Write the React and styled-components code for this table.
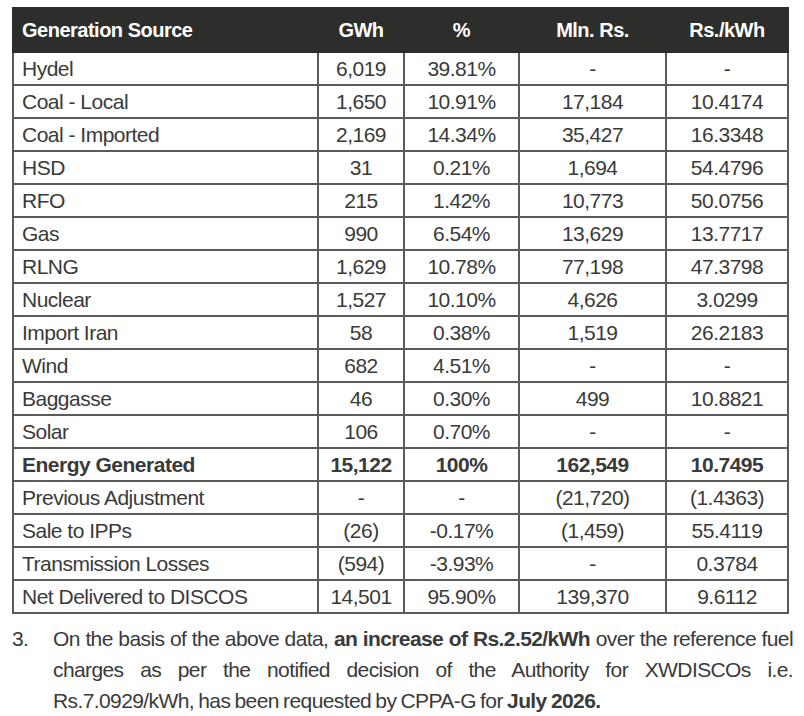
import React from "react";
import styled, { createGlobalStyle } from "styled-components";

const rows = [
  ["Hydel", "6,019", "39.81%", "-", "-"],
  ["Coal - Local", "1,650", "10.91%", "17,184", "10.4174"],
  ["Coal - Imported", "2,169", "14.34%", "35,427", "16.3348"],
  ["HSD", "31", "0.21%", "1,694", "54.4796"],
  ["RFO", "215", "1.42%", "10,773", "50.0756"],
  ["Gas", "990", "6.54%", "13,629", "13.7717"],
  ["RLNG", "1,629", "10.78%", "77,198", "47.3798"],
  ["Nuclear", "1,527", "10.10%", "4,626", "3.0299"],
  ["Import Iran", "58", "0.38%", "1,519", "26.2183"],
  ["Wind", "682", "4.51%", "-", "-"],
  ["Baggasse", "46", "0.30%", "499", "10.8821"],
  ["Solar", "106", "0.70%", "-", "-"],
  ["Energy Generated", "15,122", "100%", "162,549", "10.7495", true],
  ["Previous Adjustment", "-", "-", "(21,720)", "(1.4363)"],
  ["Sale to IPPs", "(26)", "-0.17%", "(1,459)", "55.4119"],
  ["Transmission Losses", "(594)", "-3.93%", "-", "0.3784"],
  ["Net Delivered to DISCOS", "14,501", "95.90%", "139,370", "9.6112"],
];

const headers = ["Generation Source", "GWh", "%", "Mln. Rs.", "Rs./kWh"];
const widths = [305, 86, 115, 147, 122];

const App = () => {
  return (
    <Page>
      <GlobalStyle />
      <Table>
        <colgroup>
          {widths.map((w, i) => (
            <col key={i} style={{ width: w }} />
          ))}
        </colgroup>
        <thead>
          <tr>
            {headers.map((h, i) => (
              <HeadCell key={h} $align={i === 0 ? "left" : "center"}>
                {h}
              </HeadCell>
            ))}
          </tr>
        </thead>
        <tbody>
          {rows.map((r) => (
            <tr key={r[0]}>
              {r.slice(0, 5).map((v, i) => (
                <Cell key={i} $align={i === 0 ? "left" : "center"} $bold={r[5]}>
                  {v}
                </Cell>
              ))}
            </tr>
          ))}
        </tbody>
      </Table>

      <Note>
        <Num>3.</Num>
        <NoteText>
          <Line $justify>
            On the basis of the above data, <b>an increase of Rs.2.52/kWh</b> over the reference fuel
          </Line>
          <Line $justify>
            charges as per the notified decision of the Authority for XWDISCOs i.e.
          </Line>
          <Line>
            Rs.7.0929/kWh, has been requested by CPPA-G for <b>July 2026.</b>
          </Line>
        </NoteText>
      </Note>
    </Page>
  );
};

export default App;

const GlobalStyle = createGlobalStyle`
  body {
    margin: 0;
    background: #ffffff;
    font-family: "Liberation Sans", Arial, sans-serif;
  }
`;

const Page = styled.div`
  width: 804px;
  height: 716px;
  padding: 7px 0 0 12px;
  box-sizing: border-box;
`;

const Table = styled.table`
  width: 775px;
  table-layout: fixed;
  border-collapse: collapse;
  color: #393a39;
`;

const HeadCell = styled.th`
  height: 42px;
  padding: 0 8px;
  background: #2c2e2b;
  color: #ffffff;
  font-size: 20px;
  letter-spacing: -0.5px;
  font-weight: bold;
  text-align: ${(p) => p.$align};
  border: 2px solid #2c2e2b;
  border-left: 2px solid #a3a5a2;
  &:first-child {
    border-left-color: #2c2e2b;
  }
`;

const Cell = styled.td`
  height: 31px;
  padding: 0 8px;
  font-size: 21px;
  letter-spacing: -0.5px;
  font-weight: ${(p) => (p.$bold ? "bold" : "normal")};
  text-align: ${(p) => p.$align};
  border: 2px solid #5a5c5a;
  white-space: nowrap;
`;

const Note = styled.div`
  display: flex;
  margin-top: 9px;
  width: 781px;
  color: #393a39;
  font-size: 21px;
  line-height: 31px;
  letter-spacing: -0.6px;
`;

const Num = styled.div`
  width: 41px;
  flex: none;
`;

const NoteText = styled.div`
  flex: 1;
  min-width: 0;
`;

const Line = styled.div`
  white-space: nowrap;
  text-align: ${(p) => (p.$justify ? "justify" : "left")};
  text-align-last: ${(p) => (p.$justify ? "justify" : "left")};
  word-spacing: ${(p) => (p.$justify ? "0" : "-1px")};
  b {
    font-weight: bold;
  }
`;
